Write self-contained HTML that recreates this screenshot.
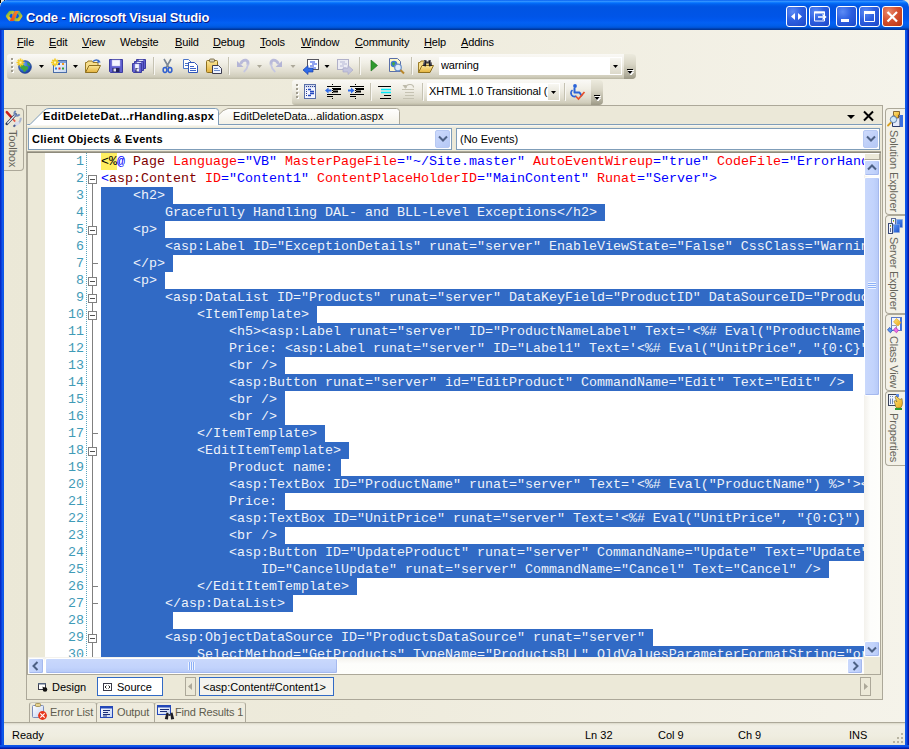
<!DOCTYPE html>
<html><head><meta charset="utf-8"><title>Code - Microsoft Visual Studio</title>
<style>
*{box-sizing:border-box;margin:0;padding:0}
html,body{width:909px;height:749px;overflow:hidden;background:linear-gradient(to right,#EBE8D7 0,#EEEBDC 40%,#F5F3EA 100%)}
body{font-family:"Liberation Sans",sans-serif;font-size:11px;color:#000;position:relative}
.a{position:absolute}
.t{position:absolute;white-space:pre;line-height:13px;height:13px}
u{text-decoration:underline;text-underline-offset:1px}
#title{left:0;top:0;width:909px;height:30px;background:linear-gradient(to bottom,#0058ee 0%,#3593ff 4%,#288eff 6%,#127dff 8%,#036ffc 10%,#0262ee 14%,#0057e5 20%,#0054e3 24%,#0055e8 56%,#0058ee 66%,#0360f4 76%,#005ee9 86%,#0052d6 92%,#0040ab 96%,#003092 100%);border-radius:7px 7px 0 0}
#bl{left:0;top:30px;width:4px;height:719px;background:linear-gradient(to right,#0422B8 0,#0838D8 30%,#0E58EA 60%,#0C55E4 100%)}
#br{left:905px;top:30px;width:4px;height:719px;background:linear-gradient(to left,#001590 0,#0426C4 30%,#0C50E4 60%,#0E5AEA 100%)}
#bb{left:0;top:745px;width:909px;height:4px;background:linear-gradient(to top,#001590 0,#0426C4 30%,#0C50E4 60%,#0E5AEA 100%)}
.code{position:absolute;left:102px;white-space:pre;font-family:"Liberation Mono",monospace;font-size:13.333px;line-height:17px;height:17px;color:#EEF2FA}
.ln{position:absolute;left:45px;width:40px;text-align:right;font-family:"Liberation Mono",monospace;font-size:13.333px;line-height:17px;height:17px;color:#3F9BB7}
.sel{position:absolute;left:101px;height:17px;background:#316AC5}
.tb{background:linear-gradient(to bottom,#FAF9F6 0%,#F1EFE6 35%,#E0DDCF 70%,#CFCCBA 92%,#B9B6A3 100%);border-radius:3px 4px 4px 3px}
.grip{width:3px;height:16px;background:linear-gradient(to right,transparent 0,transparent 1px,#fff 1px,#fff 3px) 0 1px/3px 4px repeat-y,linear-gradient(#A7A398,#A7A398) 0 0/2px 2px}
.grip i{position:absolute;left:0;width:2px;height:2px;background:#A09C8E}
.vt{writing-mode:vertical-rl;white-space:pre;font-size:11px;color:#66645A;line-height:13px;width:13px}
.sb{background:linear-gradient(to right,#C9D8FC 0,#C2D3FC 60%,#B6C9F7 100%);border:1px solid #fff;border-radius:2px;box-shadow:inset -1px -1px 0 #A5B9EE}
.m{color:#800000}.r{color:#f00}.b{color:#00f}.k{color:#000}
</style></head>
<body>
<div class="a" style="left:0;top:0;width:909px;height:10px;background:#ECE9D8"></div>
<div class="a" style="left:0;top:0;width:1px;height:3px;background:#000"></div><div class="a" style="left:4px;top:0;width:1px;height:1px;background:#000"></div>
<div class="a" id="title"></div>
<div class="a" id="bl"></div><div class="a" id="br"></div><div class="a" id="bb"></div>
<div class="t" style="left:26px;top:10px;font-size:13px;font-weight:bold;color:#fff;line-height:16px;height:16px;letter-spacing:-.17px;text-shadow:1px 1px 0 #0a1883">Code - Microsoft Visual Studio</div>
<svg class="a" style="left:5px;top:10px" width="18" height="12" viewBox="5 10 18 12"><defs><linearGradient id="gL1" x1="0" y1="0" x2="1" y2="1"><stop offset="0" stop-color="#5FB04A"/><stop offset=".5" stop-color="#F8C81C"/><stop offset="1" stop-color="#4A8FD8"/></linearGradient><linearGradient id="gL2" x1="0" y1="0" x2="1" y2="1"><stop offset="0" stop-color="#4A8FD8"/><stop offset=".5" stop-color="#6FB850"/><stop offset="1" stop-color="#F8C81C"/></linearGradient><linearGradient id="gL3" x1="0" y1="1" x2="1" y2="0"><stop offset="0" stop-color="#E8401C"/><stop offset="1" stop-color="#F89028"/></linearGradient></defs><path d="M7.300 16 L10 12.300 H13 L15 16 L13 19.700 H10 Z" fill="none" stroke="url(#gL1)" stroke-width="3" stroke-linejoin="round"/><path d="M13.500 16 L15.500 12.300 H18.500 L21 16 L18.500 19.700 H15.500 Z" fill="none" stroke="url(#gL2)" stroke-width="3" stroke-linejoin="round"/><path d="M9.800 21 L15 11 H18.800 L13.600 21 Z" fill="url(#gL3)"/></svg>
<div class="t" style="left:17px;top:36px;letter-spacing:-.15px"><u>F</u>ile</div>
<div class="t" style="left:49px;top:36px;letter-spacing:-.15px"><u>E</u>dit</div>
<div class="t" style="left:82px;top:36px;letter-spacing:-.15px"><u>V</u>iew</div>
<div class="t" style="left:120px;top:36px;letter-spacing:-.15px">Web<u>s</u>ite</div>
<div class="t" style="left:175px;top:36px;letter-spacing:-.15px"><u>B</u>uild</div>
<div class="t" style="left:213px;top:36px;letter-spacing:-.15px"><u>D</u>ebug</div>
<div class="t" style="left:260px;top:36px;letter-spacing:-.15px"><u>T</u>ools</div>
<div class="t" style="left:301px;top:36px;letter-spacing:-.15px"><u>W</u>indow</div>
<div class="t" style="left:355px;top:36px;letter-spacing:-.15px"><u>C</u>ommunity</div>
<div class="t" style="left:424px;top:36px;letter-spacing:-.15px"><u>H</u>elp</div>
<div class="t" style="left:461px;top:36px;letter-spacing:-.15px"><u>A</u>ddins</div>
<div class="a tb" style="left:7px;top:54px;width:628px;height:25px"></div>
<div class="a tb" style="left:292px;top:80px;width:309px;height:25px"></div>
<div class="a" style="left:11px;top:58px;width:3px;height:16px"><i class="a" style="left:1px;top:1px;width:2px;height:2px;background:#fff"></i><i class="a" style="left:0;top:0px;width:2px;height:2px;background:#A09C8E"></i><i class="a" style="left:1px;top:5px;width:2px;height:2px;background:#fff"></i><i class="a" style="left:0;top:4px;width:2px;height:2px;background:#A09C8E"></i><i class="a" style="left:1px;top:9px;width:2px;height:2px;background:#fff"></i><i class="a" style="left:0;top:8px;width:2px;height:2px;background:#A09C8E"></i><i class="a" style="left:1px;top:13px;width:2px;height:2px;background:#fff"></i><i class="a" style="left:0;top:12px;width:2px;height:2px;background:#A09C8E"></i></div>
<div class="a" style="left:296px;top:84px;width:3px;height:16px"><i class="a" style="left:1px;top:1px;width:2px;height:2px;background:#fff"></i><i class="a" style="left:0;top:0px;width:2px;height:2px;background:#A09C8E"></i><i class="a" style="left:1px;top:5px;width:2px;height:2px;background:#fff"></i><i class="a" style="left:0;top:4px;width:2px;height:2px;background:#A09C8E"></i><i class="a" style="left:1px;top:9px;width:2px;height:2px;background:#fff"></i><i class="a" style="left:0;top:8px;width:2px;height:2px;background:#A09C8E"></i><i class="a" style="left:1px;top:13px;width:2px;height:2px;background:#fff"></i><i class="a" style="left:0;top:12px;width:2px;height:2px;background:#A09C8E"></i></div>
<svg class="a" style="left:0;top:0" width="909" height="110" viewBox="0 0 909 110"><defs><radialGradient id="gGlobe" cx=".35" cy=".3" r=".8"><stop offset="0" stop-color="#6BA5F5"/><stop offset=".6" stop-color="#2B63D0"/><stop offset="1" stop-color="#16348A"/></radialGradient><linearGradient id="gWin" x1="0" y1="0" x2="1" y2="1"><stop offset="0" stop-color="#FFFFFF"/><stop offset="1" stop-color="#C4D4F0"/></linearGradient><linearGradient id="gFolder" x1="0" y1="0" x2="0" y2="1"><stop offset="0" stop-color="#FBE79A"/><stop offset="1" stop-color="#E4B23C"/></linearGradient></defs><circle cx="25" cy="67" r="6.300" fill="url(#gGlobe)" stroke="#1D3C8F" stroke-width=".8"/><path d="M20 65 q2 -2 4 0 q1 2 3 1 q2 1 1 3 q-2 1 -3 3 q-2 0 -2 -2 q-2 -1 -3 -3 Z" fill="#3FA53F"/><path d="M27 62 q3 1 3.500 4 q-2 0 -3 -1.500 Z" fill="#3FA53F"/>
<g stroke="#F4CC28" stroke-width="1.700" fill="none"><path d="M20.5 58.5 v8 M16.5 62.5 h8 M17.8 59.8 l5.400 5.400 M23.2 59.8 l-5.400 5.400"/></g><rect x="19.5" y="61.5" width="2" height="2" fill="#FFF6B0"/>
<path d="M39 65 h5 l-2.500 3 Z" fill="#000"/>
<rect x="53.500" y="60.500" width="13" height="12" fill="url(#gWin)" stroke="#4A6DA8"/><rect x="54" y="61" width="12" height="2" fill="#7E9FD8"/><rect x="58" y="63" width="2" height="2" fill="#2F55D0"/><rect x="62" y="63" width="2" height="2" fill="#F29A1F"/><rect x="55" y="67.500" width="2" height="2" fill="#2F7BE0"/><rect x="58.500" y="67.500" width="2" height="2" fill="#E03020"/><rect x="62" y="67.500" width="2" height="2" fill="#35A035"/>
<g stroke="#F4CC28" stroke-width="1.700" fill="none"><path d="M55.0 58.5 v8 M51.0 62.5 h8 M52.3 59.8 l5.400 5.400 M57.7 59.8 l-5.400 5.400"/></g><rect x="54.0" y="61.5" width="2" height="2" fill="#FFF6B0"/>
<path d="M73 65 h5 l-2.500 3 Z" fill="#000"/>
<path d="M85.500 72.500 V62.500 h1.500 l1 -1.500 h4 l1 1.500 h5 v2.500" fill="#F7DE8C" stroke="#9A7B28"/><path d="M85.500 72.500 L89 65.500 H100.500 L97 72.500 Z" fill="url(#gFolder)" stroke="#8E6F1E"/><path d="M93 61.500 q3.500 -3 6.500 0" fill="none" stroke="#3A6CC8" stroke-width="1.300"/><path d="M98 59.500 l2.800 2.700 l-3.600 .8 Z" fill="#3A6CC8"/>
<g transform="translate(109 59)"><path d="M0.500 0.500 H13.5 V13.5 H1.500 L0.500 12.5 Z" fill="#5F5FD0" stroke="#3C3CA0"/><rect x="3" y="1" width="8" height="6" fill="#F4F6FF" stroke="#B8B8E8" stroke-width=".5"/><rect x="3.500" y="9" width="7" height="4" fill="#23235A"/><rect x="4.500" y="9.5" width="2.500" height="3" fill="#E8E8F8"/></g>
<g transform="translate(136 59)"><path d="M0.500 0.500 H9.5 V9.5 H1.500 L0.500 8.5 Z" fill="#5F5FD0" stroke="#3C3CA0"/><rect x="3" y="1" width="4" height="6" fill="#F4F6FF" stroke="#B8B8E8" stroke-width=".5"/><rect x="3.500" y="5" width="3" height="4" fill="#23235A"/><rect x="4.500" y="5.5" width="2.500" height="3" fill="#E8E8F8"/></g>
<g transform="translate(134 61)"><path d="M0.500 0.500 H9.5 V9.5 H1.500 L0.500 8.5 Z" fill="#5F5FD0" stroke="#3C3CA0"/><rect x="3" y="1" width="4" height="6" fill="#F4F6FF" stroke="#B8B8E8" stroke-width=".5"/><rect x="3.500" y="5" width="3" height="4" fill="#23235A"/><rect x="4.500" y="5.5" width="2.500" height="3" fill="#E8E8F8"/></g>
<g transform="translate(132 63)"><path d="M0.500 0.500 H9.5 V9.5 H1.500 L0.500 8.5 Z" fill="#5F5FD0" stroke="#3C3CA0"/><rect x="3" y="1" width="4" height="6" fill="#F4F6FF" stroke="#B8B8E8" stroke-width=".5"/><rect x="3.500" y="5" width="3" height="4" fill="#23235A"/><rect x="4.500" y="5.5" width="2.500" height="3" fill="#E8E8F8"/></g>
<rect x="153" y="57" width="1" height="17" fill="#C5C2B2"/><rect x="154" y="58" width="1" height="17" fill="#F8F7F3"/>
<path d="M164 59 L168.800 67.500 M171 59 L166.200 67.500" stroke="#7B8796" stroke-width="1.600" fill="none"/><ellipse cx="165" cy="70" rx="1.900" ry="2.400" fill="none" stroke="#2F5FD0" stroke-width="1.500"/><ellipse cx="170" cy="70" rx="1.900" ry="2.400" fill="none" stroke="#2F5FD0" stroke-width="1.500"/>
<path d="M183.5 59.5 h5 l3 3 v6 h-8 Z" fill="#fff" stroke="#4A74C8"/>
<path d="M185 63.500 h4 M185 65.500 h5" stroke="#4A74C8"/>
<path d="M188.5 62.5 h6 l3 3 v7 h-9 Z" fill="#fff" stroke="#2F55B8"/>
<path d="M190 66.500 h4 M190 68.500 h6 M190 70.500 h6" stroke="#3B62C8"/>
<rect x="206.500" y="60.500" width="11" height="12" rx="1" fill="url(#gFolder)" stroke="#8E6F1E"/><rect x="209.500" y="59" width="5" height="3" rx="1" fill="#D8D0B8" stroke="#6B5A30" stroke-width=".8"/><path d="M212.500 65.500 h6 l3 3 v5 h-9 Z" fill="#EEF3FF" stroke="#3C3C50"/><path d="M214 68.500 h4 M214 70.500 h6" stroke="#6C8CCB"/>
<rect x="228" y="57" width="1" height="17" fill="#C5C2B2"/><rect x="229" y="58" width="1" height="17" fill="#F8F7F3"/>
<g><path d="M237 61 V67 H243.500 Z" fill="#B4B5D6"/><path d="M240.500 64 Q242.500 59.800 245.800 60.200 Q248.800 61.200 247.800 65" fill="none" stroke="#B9BAD9" stroke-width="2.800"/><path d="M248 64.500 Q247.300 69 244.200 71.500" fill="none" stroke="#C6C7E0" stroke-width="1.800" stroke-linecap="round"/></g>
<path d="M257 65 h5 l-2.500 3 Z" fill="#ACA899"/>
<g transform="translate(519 0) scale(-1 1)"><path d="M237 61 V67 H243.500 Z" fill="#B4B5D6"/><path d="M240.500 64 Q242.500 59.800 245.800 60.200 Q248.800 61.200 247.800 65" fill="none" stroke="#B9BAD9" stroke-width="2.800"/><path d="M248 64.500 Q247.300 69 244.200 71.500" fill="none" stroke="#C6C7E0" stroke-width="1.800" stroke-linecap="round"/></g>
<path d="M290.5 65 h5 l-2.500 3 Z" fill="#ACA899"/>
<rect x="307.500" y="59.500" width="11" height="10" fill="#fff" stroke="#55555F"/><path d="M310 62 h5 M312 64 h5 M310 66 h4 M313 68 h3" stroke="#2448E0" stroke-width="1.200"/><path d="M303 70 l5 -4.500 v2.500 h5 v4 h-5 v2.500 Z" fill="#2F6BE8" stroke="#1A3FA8" stroke-width=".7"/>
<path d="M324.5 65 h5 l-2.500 3 Z" fill="#000"/>
<rect x="337.500" y="59.500" width="11" height="10" fill="#ECECF4" stroke="#B0B0C8"/><path d="M340 62 h5 M342 64 h5 M340 66 h4 M343 68 h3" stroke="#B6B7D6" stroke-width="1.200"/><path d="M353 70 l-5 -4.500 v2.500 h-5 v4 h5 v2.500 Z" fill="#C3C4DD" stroke="#ABABC8" stroke-width=".7"/>
<rect x="359" y="57" width="1" height="17" fill="#C5C2B2"/><rect x="360" y="58" width="1" height="17" fill="#F8F7F3"/>
<path d="M371 60 L377.500 65.500 L371 71 Z" fill="#2E9A2E" stroke="#1E6E1E" stroke-width=".6"/>
<path d="M389.500 58.500 h8 l3 3 v10 h-11 Z" fill="#FFF7C8" stroke="#5A6FA8"/><circle cx="394" cy="64" r="3.300" fill="#3A78D8"/><path d="M392 63 q2 -2 3 0 q0 2 -1.500 3 q-1.500 -1 -1.500 -3 Z" fill="#45A845"/><circle cx="398" cy="67.500" r="3.300" fill="#DCEBFA" stroke="#6A8FC8" stroke-width="1.200"/><path d="M400.500 70 L404 73.500" stroke="#B8862B" stroke-width="2"/>
<rect x="411" y="57" width="1" height="17" fill="#C5C2B2"/><rect x="412" y="58" width="1" height="17" fill="#F8F7F3"/>
<path d="M418.500 72.500 V62.500 h1.500 l1 -1.500 h4 l1 1.500 h5 v2" fill="#F7DE8C" stroke="#9A7B28"/><path d="M418.500 72.500 L422 65.500 H433.500 L430 72.500 Z" fill="url(#gFolder)" stroke="#8E6F1E"/><path d="M424.500 60 l2.200 .6 l-.8 6 l-3.200 -.8 Z M430.500 60 l-2.200 .6 l.8 6 l3.200 -.8 Z" fill="#1E1E26"/><rect x="426.300" y="61.500" width="2.400" height="2" fill="#3A3A46"/><path d="M424.600 61 l-.9 4 M430.400 61 l.9 4" stroke="#8C8CA0" stroke-width=".7"/>
<rect x="304.500" y="84.500" width="11" height="14" fill="#F4F6FF" stroke="#5A6FA8"/><rect x="305" y="85" width="10" height="2.500" fill="#D0D8F0"/><path d="M306 86.500 h1 m1 0 h1 m1 0 h1 m1 0 h1 m1 0 h1" stroke="#2A3F90"/><path d="M306 89.500 h1 M306 91.500 h1 M306 93.500 h1 M306 95.500 h1" stroke="#2A3F90"/><path d="M308 89.500 h3 M310 91.500 h4 M310 93.500 h4 M308 95.500 h3" stroke="#2448C0" stroke-width="1.300"/>
<path d="M327 86.500 h14 M327 94.500 h14 M327 96.500 h6" stroke="#000"/><path d="M333 89 h8 M333 91.500 h5" stroke="#000" stroke-width="2"/><path d="M332.5 84 v1 m0 1 v1 m0 1 v1 m0 1 v1 m0 1 v1 m0 1 v1 m0 1 v1 m0 1 v1" stroke="#000"/><path d="M325 90.500 l3.500 -3 v2 h3 v2 h-3 v2 Z" fill="#2F6BE8"/>
<path d="M350 86.500 h14 M350 94.500 h14 M350 96.500 h6" stroke="#000"/><path d="M356 89 h8 M356 91.500 h5" stroke="#000" stroke-width="2"/><path d="M355.5 84 v1 m0 1 v1 m0 1 v1 m0 1 v1 m0 1 v1 m0 1 v1 m0 1 v1 m0 1 v1" stroke="#000"/><path d="M354.5 90.500 l-3.500 -3 v2 h-3 v2 h3 v2 Z" fill="#2F6BE8"/>
<rect x="370" y="83" width="1" height="17" fill="#C5C2B2"/><rect x="371" y="84" width="1" height="17" fill="#F8F7F3"/>
<path d="M378 86.500 h13 M384 95.500 h7 M380 98.500 h11" stroke="#000" stroke-width="1.200"/><path d="M381 89.500 h10 M381 92.500 h10" stroke="#00E8F8" stroke-width="1.300"/>
<path d="M402 89.500 h12 M405 92.500 h9 M405 95.500 h9 M403 98.500 h11" stroke="#C5C2B2" stroke-width="1.200"/><path d="M406 88 q0 -3.500 4 -3.500 q3.500 0 3.500 3" fill="none" stroke="#BDBAAA" stroke-width="1.200"/><path d="M402.500 85 l4 0 l-1 4 Z" fill="#BDBAAA"/>
<rect x="422" y="83" width="1" height="17" fill="#C5C2B2"/><rect x="423" y="84" width="1" height="17" fill="#F8F7F3"/>
<rect x="564" y="83" width="1" height="17" fill="#C5C2B2"/><rect x="565" y="84" width="1" height="17" fill="#F8F7F3"/>
<circle cx="575" cy="86" r="1.900" fill="#2B63D8"/><path d="M574.500 88.500 v4 h5 l2 3" fill="none" stroke="#2B63D8" stroke-width="2" stroke-linecap="round" stroke-linejoin="round"/><path d="M572.500 90 q-2.500 2 -1 5 q2 2.500 5 1" fill="none" stroke="#2B63D8" stroke-width="1.600"/><path d="M576 96.500 l2.500 2.500 l6 -7" fill="none" stroke="#E8502A" stroke-width="1.700"/></svg>
<div class="a" style="left:439px;top:57px;width:183px;height:18px;background:#fff"></div>
<div class="a" style="left:610px;top:58px;width:11px;height:16px;background:linear-gradient(to bottom,#F8F7F2,#DCD9CA)"></div>
<svg class="a" style="left:613px;top:65px" width="5" height="3" viewBox="0 0 5 3"><path d="M0 0 h5 l-2.500 3 Z" fill="#000"/></svg>
<div class="t" style="left:441px;top:59px;width:169px;overflow:hidden;letter-spacing:-.12px">warning</div>
<div class="a" style="left:427px;top:83px;width:133px;height:18px;background:#fff"></div>
<div class="a" style="left:548px;top:84px;width:11px;height:16px;background:linear-gradient(to bottom,#F8F7F2,#DCD9CA)"></div>
<svg class="a" style="left:551px;top:91px" width="5" height="3" viewBox="0 0 5 3"><path d="M0 0 h5 l-2.500 3 Z" fill="#000"/></svg>
<div class="t" style="left:429px;top:85px;width:119px;overflow:hidden;letter-spacing:-.12px">XHTML 1.0 Transitional (</div>
<div class="a" style="left:624px;top:54px;width:12px;height:25px;border-radius:0 4px 4px 0;background:linear-gradient(to bottom,#ECEADD 0,#D9D6C6 40%,#B5B2A0 80%,#9C9986 100%)"></div>
<svg class="a" style="left:626px;top:68px" width="9" height="8" viewBox="0 0 9 8"><path d="M2 2.500 h6 M2.500 4 h5 l-2.500 3 Z" fill="#fff" stroke="#fff" stroke-width="1"/><path d="M1 1.500 h6" stroke="#000"/><path d="M1.500 3 h5 l-2.500 3 Z" fill="#000"/></svg>
<div class="a" style="left:591px;top:80px;width:12px;height:25px;border-radius:0 4px 4px 0;background:linear-gradient(to bottom,#ECEADD 0,#D9D6C6 40%,#B5B2A0 80%,#9C9986 100%)"></div>
<svg class="a" style="left:593px;top:94px" width="9" height="8" viewBox="0 0 9 8"><path d="M2 2.500 h6 M2.500 4 h5 l-2.500 3 Z" fill="#fff" stroke="#fff" stroke-width="1"/><path d="M1 1.500 h6" stroke="#000"/><path d="M1.500 3 h5 l-2.500 3 Z" fill="#000"/></svg>
<div class="a" style="left:4px;top:108px;width:20px;height:63px;border:1px solid #ACA899;border-left:none;border-radius:0 4px 4px 0"></div>
<div class="a vt" id="vt0" style="left:6px;top:130px;letter-spacing:-.13px">Toolbox</div>
<svg class="a" style="left:4px;top:108px;overflow:visible" width="20" height="22" viewBox="4 108 20 22"><g transform="translate(13.5 118.5) scale(1.12) translate(-13.5 -118.2)"><path d="M7.500 112.500 L12 117.500" stroke="#C8201C" stroke-width="2.200" stroke-linecap="round"/><path d="M12 117.500 L15 121" stroke="#E85848" stroke-width="1.600"/><path d="M7.500 123 L15.500 114.500" stroke="#2A3A5A" stroke-width="2.400" stroke-linecap="round"/><path d="M8 122.500 L15.500 114.500" stroke="#fff" stroke-width="1.100"/><path d="M15.500 111.500 q-2 1.500 -.5 3.500 q2 1.500 4 -.5" fill="none" stroke="#7088B8" stroke-width="1.800"/><path d="M14 125.500 l2.500 -3 q3.500 -.5 3.500 -5" fill="none" stroke="#A8B4D0" stroke-width="1.800"/><path d="M15 121 l4 0 l-1 3 l-3 1 Z" fill="#D8DCEC"/><path d="M13.500 125.500 l1.500 -1.500" stroke="#4A5A88" stroke-width="1.500"/></g></svg>
<div class="a" style="left:885px;top:108px;width:20px;height:107px;background:#F3F1E7;border:1px solid #ACA899;border-right:none;border-radius:4px 0 0 4px"></div>
<div class="a vt" id="vt1" style="left:887px;top:130px;letter-spacing:-0.1px">Solution Explorer</div>
<div class="a" style="left:885px;top:215px;width:20px;height:99px;background:#F3F1E7;border:1px solid #ACA899;border-right:none;border-radius:4px 0 0 4px"></div>
<div class="a vt" id="vt2" style="left:887px;top:237px;letter-spacing:-0.22px">Server Explorer</div>
<div class="a" style="left:885px;top:314px;width:20px;height:77px;background:#F3F1E7;border:1px solid #ACA899;border-right:none;border-radius:4px 0 0 4px"></div>
<div class="a vt" id="vt3" style="left:887px;top:336px;letter-spacing:-0.22px">Class View</div>
<div class="a" style="left:885px;top:391px;width:20px;height:75px;background:#F3F1E7;border:1px solid #ACA899;border-right:none;border-radius:4px 0 0 4px"></div>
<div class="a vt" id="vt4" style="left:887px;top:413px;letter-spacing:-0.1px">Properties</div>
<svg class="a" style="left:885px;top:105px" width="20" height="310" viewBox="885 105 20 310"><defs><linearGradient id="gScr" x1="0" y1="0" x2="1" y2="1"><stop offset="0" stop-color="#5A9AF8"/><stop offset="1" stop-color="#1C4FC8"/></linearGradient><linearGradient id="gGold" x1="0" y1="0" x2="1" y2="1"><stop offset="0" stop-color="#FFE27A"/><stop offset="1" stop-color="#E8A818"/></linearGradient></defs><path d="M892.500 126.500 V116 H900 V126.500 Z" fill="#E4EAFA" stroke="#2A3A6A"/><rect x="900" y="115" width="3" height="12" fill="#3A6FE0"/><path d="M893.500 111.500 h6 v3.500 h-1 v3 h-2 l-3 -3 Z" fill="url(#gGold)" stroke="#6A4A18" stroke-width=".8"/><path d="M891.500 122 L888 125.500" stroke="#D8A020" stroke-width="1.800" stroke-linecap="round"/><circle cx="893.500" cy="119.500" r="3.200" fill="#CFE8F8" stroke="#5A7AA8" stroke-width=".9"/><rect x="896.500" y="219.500" width="6" height="8" fill="url(#gScr)" stroke="#8AA8E0" stroke-width=".6"/><rect x="891.500" y="218.500" width="4" height="7" fill="#F0F4FF" stroke="#5A6A98"/><rect x="893" y="220" width="1" height="1" fill="#40B040"/><rect x="893" y="221" width="1" height="1" fill="#F0A020"/><rect x="893.500" y="224.500" width="6" height="8" fill="url(#gScr)" stroke="#8AA8E0" stroke-width=".6"/><rect x="888.500" y="223.500" width="4" height="10" fill="#F0F4FF" stroke="#3A4A78"/><rect x="890" y="225" width="1" height="1" fill="#40B040"/><rect x="890" y="226" width="1" height="1" fill="#F0A020"/><rect x="890" y="228" width="1" height="4" fill="#5A6A98"/><rect x="891.500" y="317.500" width="10" height="13" fill="#F2F6FF" stroke="#5A7AC8"/><rect x="900" y="318" width="1.500" height="12" fill="#3A6FE0"/><path d="M891.500 325.500 h5 v5" fill="none" stroke="#9AA0A8"/><path d="M896.500 318.500 L901 322.500 L898 326 L893.500 322 Z" fill="url(#gGold)" stroke="#E0A010" stroke-width=".6"/><path d="M889.500 327.500 L892.500 330 L890.500 332.800 L887.500 330 Z" fill="#5A9AE8" stroke="#1C3FB0" stroke-width=".7"/><path d="M895.500 327.500 L898.500 330 L896.500 332.800 L893.500 330 Z" fill="#F070E8" stroke="#B030B0" stroke-width=".7"/><rect x="888.500" y="394.500" width="9" height="11" fill="#EEF4FF" stroke="#3A4258"/><rect x="896" y="394" width="3" height="3" fill="#5A8AE8"/><path d="M890.500 396 v1 m0 1.500 v5.500 M892.500 396 v1 m0 1.500 v5.500" stroke="#7088B8"/><path d="M895 397 l1 -1 l4 3.500 l2 -1 l.5 4.500 q0 3 -2 5 h-3.500 q-2 -1 -2 -4 l-1 -3 l1.500 -.5 l1.500 1.500 Z" fill="url(#gGold)" stroke="#5A4A18" stroke-width=".5"/><rect x="895" y="408" width="7" height="2" fill="#2F9A2F"/></svg>
<div class="a" style="left:26px;top:105px;width:857px;height:595px;border:1px solid #ACA899;background:#ECE9D8"></div>
<div class="a" style="left:27px;top:106px;width:855px;height:19px;background:#EBE8D8"></div>
<div class="a" style="left:27px;top:124px;width:855px;height:1px;background:#7F9DB9"></div>
<svg class="a" style="left:27px;top:106px" width="380" height="20" viewBox="0 0 380 20"><defs><linearGradient id="gTab" x1="0" y1="0" x2="0" y2="1"><stop offset="0" stop-color="#FFFFFF"/><stop offset="1" stop-color="#F3F1E6"/></linearGradient></defs><path d="M191.500 9 Q196 3.500 201 2.500 H369.500 Q372.500 2.500 372.500 5.500 V18 H191.500 Z" fill="url(#gTab)" stroke="none"/><path d="M191.500 9 Q196 3.500 201 2.500 H369.500 Q372.500 2.500 372.500 5.500 V18" fill="none" stroke="#ACA899"/><path d="M0.500 18.500 H3 L17 4.500 Q19 2.500 22 2.500 H188.500 Q191.500 2.500 191.500 5.500 V19 H0 Z" fill="#fff" stroke="none"/><path d="M0.500 18.500 H3 L17 4.500 Q19 2.500 22 2.500 H188.500 Q191.500 2.500 191.500 5.500 V19" fill="none" stroke="#7F9DB9"/></svg>
<div class="t" style="left:43px;top:110px;font-weight:bold;letter-spacing:.37px">EditDeleteDat...rHandling.aspx</div>
<div class="t" style="left:233px;top:110px">EditDeleteData...alidation.aspx</div>
<div class="a" style="left:27px;top:125px;width:855px;height:3px;background:linear-gradient(to bottom,#FBFAF6,#F1EFE3 50%,#EAE7D7)"></div>
<svg class="a" style="left:845px;top:109.500px" width="32" height="12" viewBox="0 0 32 12"><path d="M2 5 H10 L6 9 Z" fill="#000"/><path d="M19 1.500 L28 10.500 M28 1.500 L19 10.500" stroke="#000" stroke-width="2" fill="none"/></svg>
<div class="a" style="left:28px;top:128px;width:424px;height:22px;background:#fff;border:1px solid #7F9DB9"></div>
<div class="t" style="left:32px;top:133px;font-weight:bold;letter-spacing:.3px">Client Objects &amp; Events</div>
<div class="a" style="left:435px;top:130px;width:15px;height:18px;border-radius:2px;background:linear-gradient(135deg,#CDDAFC,#B4C8F6);border:1px solid #B7C9F3"></div>
<svg class="a" style="left:438px;top:135px" width="10" height="8" viewBox="0 0 10 8"><path d="M1 1.500 L5 5.500 L9 1.500" fill="none" stroke="#4D6185" stroke-width="2"/></svg>
<div class="a" style="left:456px;top:128px;width:424px;height:22px;background:#fff;border:1px solid #7F9DB9"></div>
<div class="t" style="left:460px;top:133px;">(No Events)</div>
<div class="a" style="left:863px;top:130px;width:15px;height:18px;border-radius:2px;background:linear-gradient(135deg,#CDDAFC,#B4C8F6);border:1px solid #B7C9F3"></div>
<svg class="a" style="left:866px;top:135px" width="10" height="8" viewBox="0 0 10 8"><path d="M1 1.500 L5 5.500 L9 1.500" fill="none" stroke="#4D6185" stroke-width="2"/></svg>
<div class="a" style="left:27px;top:151px;width:854px;height:1px;background:#ACA899"></div>
<div class="a" style="left:27px;top:152px;width:854px;height:1px;background:#8E8B7C"></div>
<div class="a" id="ed" style="left:28px;top:153px;width:836px;height:504px;background:#fff;overflow:hidden">
<div class="a" style="left:0;top:0;width:17px;height:504px;background:#ECE9D8"></div>
<div class="ln" style="left:16px;top:0px">1</div>
<div class="a" style="left:73px;top:0;width:16px;height:17px;background:#FFEE62"></div>
<div class="code" style="left:73px;top:0px"><span class="k">&lt;%</span><span class="b">@</span><span class="m"> Page</span> <span class="r">Language</span><span class="b">="VB"</span> <span class="r">MasterPageFile</span><span class="b">="~/Site.master"</span> <span class="r">AutoEventWireup</span><span class="b">="true"</span> <span class="r">CodeFile</span><span class="b">="ErrorHandling.aspx.vb"</span> <span class="r">Inherits</span><span class="b">="EditDeleteDataList_ErrorHandling"</span> </div>
<div class="ln" style="left:16px;top:17px">2</div>
<div class="code" style="left:73px;top:17px"><span class="b">&lt;</span><span class="m">asp:Content</span> <span class="r">ID</span><span class="b">="Content1"</span> <span class="r">ContentPlaceHolderID</span><span class="b">="MainContent"</span> <span class="r">Runat</span><span class="b">="Server"&gt;</span></div>
<div class="ln" style="left:16px;top:34px">3</div>
<div class="sel" style="left:73px;top:34px;width:72px"></div>
<div class="code" style="left:73px;top:34px">    &lt;h2&gt;</div>
<div class="ln" style="left:16px;top:51px">4</div>
<div class="sel" style="left:73px;top:51px;width:504px"></div>
<div class="code" style="left:73px;top:51px">        Gracefully Handling DAL- and BLL-Level Exceptions&lt;/h2&gt;</div>
<div class="ln" style="left:16px;top:68px">5</div>
<div class="sel" style="left:73px;top:68px;width:64px"></div>
<div class="code" style="left:73px;top:68px">    &lt;p&gt;</div>
<div class="ln" style="left:16px;top:85px">6</div>
<div class="sel" style="left:73px;top:85px;width:763px"></div>
<div class="code" style="left:73px;top:85px">        &lt;asp:Label ID="ExceptionDetails" runat="server" EnableViewState="False" CssClass="Warning"</div>
<div class="ln" style="left:16px;top:102px">7</div>
<div class="sel" style="left:73px;top:102px;width:72px"></div>
<div class="code" style="left:73px;top:102px">    &lt;/p&gt;</div>
<div class="ln" style="left:16px;top:119px">8</div>
<div class="sel" style="left:73px;top:119px;width:64px"></div>
<div class="code" style="left:73px;top:119px">    &lt;p&gt;</div>
<div class="ln" style="left:16px;top:136px">9</div>
<div class="sel" style="left:73px;top:136px;width:763px"></div>
<div class="code" style="left:73px;top:136px">        &lt;asp:DataList ID="Products" runat="server" DataKeyField="ProductID" DataSourceID="ProductsDataSource" RepeatColumns="2"&gt;</div>
<div class="ln" style="left:16px;top:153px">10</div>
<div class="sel" style="left:73px;top:153px;width:216px"></div>
<div class="code" style="left:73px;top:153px">            &lt;ItemTemplate&gt;</div>
<div class="ln" style="left:16px;top:170px">11</div>
<div class="sel" style="left:73px;top:170px;width:763px"></div>
<div class="code" style="left:73px;top:170px">                &lt;h5&gt;&lt;asp:Label runat="server" ID="ProductNameLabel" Text='&lt;%# Eval("ProductName") %&gt;'&gt;&lt;/asp:Label&gt;&lt;/h5&gt;</div>
<div class="ln" style="left:16px;top:187px">12</div>
<div class="sel" style="left:73px;top:187px;width:763px"></div>
<div class="code" style="left:73px;top:187px">                Price: &lt;asp:Label runat="server" ID="Label1" Text='&lt;%# Eval("UnitPrice", "{0:C}") %&gt;' /&gt;</div>
<div class="ln" style="left:16px;top:204px">13</div>
<div class="sel" style="left:73px;top:204px;width:184px"></div>
<div class="code" style="left:73px;top:204px">                &lt;br /&gt;</div>
<div class="ln" style="left:16px;top:221px">14</div>
<div class="sel" style="left:73px;top:221px;width:752px"></div>
<div class="code" style="left:73px;top:221px">                &lt;asp:Button runat="server" id="EditProduct" CommandName="Edit" Text="Edit" /&gt;</div>
<div class="ln" style="left:16px;top:238px">15</div>
<div class="sel" style="left:73px;top:238px;width:184px"></div>
<div class="code" style="left:73px;top:238px">                &lt;br /&gt;</div>
<div class="ln" style="left:16px;top:255px">16</div>
<div class="sel" style="left:73px;top:255px;width:184px"></div>
<div class="code" style="left:73px;top:255px">                &lt;br /&gt;</div>
<div class="ln" style="left:16px;top:272px">17</div>
<div class="sel" style="left:73px;top:272px;width:224px"></div>
<div class="code" style="left:73px;top:272px">            &lt;/ItemTemplate&gt;</div>
<div class="ln" style="left:16px;top:289px">18</div>
<div class="sel" style="left:73px;top:289px;width:248px"></div>
<div class="code" style="left:73px;top:289px">            &lt;EditItemTemplate&gt;</div>
<div class="ln" style="left:16px;top:306px">19</div>
<div class="sel" style="left:73px;top:306px;width:240px"></div>
<div class="code" style="left:73px;top:306px">                Product name:</div>
<div class="ln" style="left:16px;top:323px">20</div>
<div class="sel" style="left:73px;top:323px;width:763px"></div>
<div class="code" style="left:73px;top:323px">                &lt;asp:TextBox ID="ProductName" runat="server" Text='&lt;%# Eval("ProductName") %&gt;'&gt;&lt;/asp:TextBox&gt;&lt;br /&gt;</div>
<div class="ln" style="left:16px;top:340px">21</div>
<div class="sel" style="left:73px;top:340px;width:184px"></div>
<div class="code" style="left:73px;top:340px">                Price:</div>
<div class="ln" style="left:16px;top:357px">22</div>
<div class="sel" style="left:73px;top:357px;width:763px"></div>
<div class="code" style="left:73px;top:357px">                &lt;asp:TextBox ID="UnitPrice" runat="server" Text='&lt;%# Eval("UnitPrice", "{0:C}") %&gt;' /&gt;&lt;br /&gt;</div>
<div class="ln" style="left:16px;top:374px">23</div>
<div class="sel" style="left:73px;top:374px;width:184px"></div>
<div class="code" style="left:73px;top:374px">                &lt;br /&gt;</div>
<div class="ln" style="left:16px;top:391px">24</div>
<div class="sel" style="left:73px;top:391px;width:763px"></div>
<div class="code" style="left:73px;top:391px">                &lt;asp:Button ID="UpdateProduct" runat="server" CommandName="Update" Text="Update" /&gt;&amp;nbsp;&amp;nbsp;&amp;nbsp;&lt;asp:Button</div>
<div class="ln" style="left:16px;top:408px">25</div>
<div class="sel" style="left:73px;top:408px;width:728px"></div>
<div class="code" style="left:73px;top:408px">                    ID="CancelUpdate" runat="server" CommandName="Cancel" Text="Cancel" /&gt;</div>
<div class="ln" style="left:16px;top:425px">26</div>
<div class="sel" style="left:73px;top:425px;width:256px"></div>
<div class="code" style="left:73px;top:425px">            &lt;/EditItemTemplate&gt;</div>
<div class="ln" style="left:16px;top:442px">27</div>
<div class="sel" style="left:73px;top:442px;width:192px"></div>
<div class="code" style="left:73px;top:442px">        &lt;/asp:DataList&gt;</div>
<div class="ln" style="left:16px;top:459px">28</div>
<div class="sel" style="left:73px;top:459px;width:72px"></div>
<div class="code" style="left:73px;top:459px">        </div>
<div class="ln" style="left:16px;top:476px">29</div>
<div class="sel" style="left:73px;top:476px;width:552px"></div>
<div class="code" style="left:73px;top:476px">        &lt;asp:ObjectDataSource ID="ProductsDataSource" runat="server"</div>
<div class="ln" style="left:16px;top:493px">30</div>
<div class="sel" style="left:73px;top:493px;width:763px"></div>
<div class="code" style="left:73px;top:493px">            SelectMethod="GetProducts" TypeName="ProductsBLL" OldValuesParameterFormatString="original_{0}"&gt;</div>
<svg class="a" style="left:56px;top:0" width="16" height="504" viewBox="84 153 16 504"><path d="M86.500 153 V657" stroke="#5BA5BD" stroke-dasharray="1 1"/><path d="M92.500 184 V657" stroke="#808080"/><path d="M92 263.5 H98" stroke="#808080"/><path d="M92 433.5 H98" stroke="#808080"/><path d="M92 586.5 H98" stroke="#808080"/><path d="M92 603.5 H98" stroke="#808080"/><rect x="88.500" y="175.5" width="8" height="8" fill="#fff" stroke="#808080"/><path d="M90 179.5 H95" stroke="#505050"/><rect x="88.500" y="226.5" width="8" height="8" fill="#fff" stroke="#808080"/><path d="M90 230.5 H95" stroke="#505050"/><rect x="88.500" y="277.5" width="8" height="8" fill="#fff" stroke="#808080"/><path d="M90 281.5 H95" stroke="#505050"/><rect x="88.500" y="294.5" width="8" height="8" fill="#fff" stroke="#808080"/><path d="M90 298.5 H95" stroke="#505050"/><rect x="88.500" y="311.5" width="8" height="8" fill="#fff" stroke="#808080"/><path d="M90 315.5 H95" stroke="#505050"/><rect x="88.500" y="447.5" width="8" height="8" fill="#fff" stroke="#808080"/><path d="M90 451.5 H95" stroke="#505050"/><rect x="88.500" y="634.5" width="8" height="8" fill="#fff" stroke="#808080"/><path d="M90 638.5 H95" stroke="#505050"/></svg>
</div>
<div class="a" style="left:864px;top:153px;width:16px;height:504px;background:linear-gradient(to right,#F3F1EC 0,#FDFDFB 40%,#FEFEFB 100%)"></div>
<div class="a" style="left:864px;top:153px;width:16px;height:7px;background:#ECE9D8;border:1px solid;border-color:#fff #ACA899 #ACA899 #fff"></div>
<div class="a sb" style="left:864px;top:160px;width:16px;height:16px"></div>
<svg class="a" style="left:864px;top:160px" width="16" height="16" viewBox="0 0 16 16"><path d="M4 9.500 L8 5.500 L12 9.500" fill="none" stroke="#4D6185" stroke-width="2"/></svg>
<div class="a sb" style="left:864px;top:641px;width:16px;height:16px"></div>
<svg class="a" style="left:864px;top:641px" width="16" height="16" viewBox="0 0 16 16"><path d="M4 6.500 L8 10.500 L12 6.500" fill="none" stroke="#4D6185" stroke-width="2"/></svg>
<div class="a sb" style="left:864px;top:177px;width:16px;height:219px"></div>
<div class="a" style="left:868px;top:282px;width:8px;height:7px;background:repeating-linear-gradient(to bottom,#EEF4FE 0,#EEF4FE 1px,#8CB0F8 1px,#8CB0F8 2px)"></div>
<div class="a" style="left:28px;top:657px;width:836px;height:17px;background:linear-gradient(to bottom,#F3F1EC 0,#FDFDFB 40%,#FEFEFB 100%)"></div>
<div class="a" style="left:864px;top:657px;width:16px;height:17px;background:#ECE9D8"></div>
<div class="a sb" style="left:28px;top:658px;width:16px;height:16px"></div>
<svg class="a" style="left:28px;top:658px" width="16" height="16" viewBox="0 0 16 16"><path d="M9.500 4 L5.500 8 L9.500 12" fill="none" stroke="#4D6185" stroke-width="2"/></svg>
<div class="a sb" style="left:847px;top:658px;width:16px;height:16px"></div>
<svg class="a" style="left:847px;top:658px" width="16" height="16" viewBox="0 0 16 16"><path d="M6.500 4 L10.500 8 L6.500 12" fill="none" stroke="#4D6185" stroke-width="2"/></svg>
<div class="a sb" style="left:45px;top:658px;width:293px;height:16px;background:linear-gradient(to bottom,#C9D8FC 0,#C2D3FC 60%,#B6C9F7 100%)"></div>
<div class="a" style="left:188px;top:662px;width:7px;height:8px;background:repeating-linear-gradient(to right,#EEF4FE 0,#EEF4FE 1px,#8CB0F8 1px,#8CB0F8 2px)"></div>
<div class="a" style="left:880px;top:153px;width:1px;height:521px;background:#ACA899"></div>
<div class="a" style="left:27px;top:153px;width:1px;height:521px;background:#ACA899"></div>
<div class="a" style="left:27px;top:674px;width:854px;height:1px;background:#ACA899"></div>
<div class="t" style="left:52px;top:681px">Design</div>
<div class="a" style="left:97px;top:677px;width:66px;height:19px;background:#fff;border:1px solid #316AC5"></div>
<div class="t" style="left:117px;top:681px">Source</div>
<div class="a" style="left:185px;top:677px;width:11px;height:19px;border:1px solid #ACA899;background:#ECE9D8"></div>
<svg class="a" style="left:185px;top:677px" width="11" height="19" viewBox="0 0 11 19"><path d="M7 6 L3 9.500 L7 13 Z" fill="#ACA899"/></svg>
<div class="a" style="left:860px;top:677px;width:11px;height:19px;border:1px solid #ACA899;background:#ECE9D8"></div>
<svg class="a" style="left:860px;top:677px" width="11" height="19" viewBox="0 0 11 19"><path d="M4 6 L8 9.500 L4 13 Z" fill="#ACA899"/></svg>
<div class="a" style="left:199px;top:677px;width:135px;height:19px;border:1px solid #316AC5;background:#F4F3EE"></div>
<div class="t" style="left:203px;top:681px">&lt;asp:Content#Content1&gt;</div>
<svg class="a" style="left:36px;top:680px" width="80" height="14" viewBox="36 680 80 14"><rect x="38.500" y="683.500" width="7" height="6" fill="#fff" stroke="#3A3A48"/><rect x="38" y="683" width="8" height="1.500" fill="#55657F"/><circle cx="45" cy="689.500" r="2.300" fill="#111"/><path d="M42.500 686.500 l3 2 l-2.500 1 Z" fill="#111"/><rect x="103.500" y="683.500" width="8" height="7" fill="#fff" stroke="#3A3A48"/><path d="M106.500 685.500 l-1.500 1.500 l1.500 1.500 M108.500 685.500 l1.500 1.500 l-1.500 1.500" fill="none" stroke="#111" stroke-width=".9"/></svg>
<div class="a" style="left:29px;top:702px;width:68px;height:20px;border:1px solid #ACA899;border-top-color:#CDCABB;border-bottom:none;border-radius:3px 3px 0 0;background:rgba(255,255,255,.12)"></div>
<div class="t" style="left:50px;top:706px;color:#5E5C4E;letter-spacing:-.15px">Error List</div>
<div class="a" style="left:96px;top:702px;width:59px;height:20px;border:1px solid #ACA899;border-top-color:#CDCABB;border-bottom:none;border-radius:3px 3px 0 0;background:rgba(255,255,255,.12)"></div>
<div class="t" style="left:117px;top:706px;color:#5E5C4E;letter-spacing:-.15px">Output</div>
<div class="a" style="left:154px;top:702px;width:92px;height:20px;border:1px solid #ACA899;border-top-color:#CDCABB;border-bottom:none;border-radius:3px 3px 0 0;background:rgba(255,255,255,.12)"></div>
<div class="t" style="left:175px;top:706px;color:#5E5C4E;letter-spacing:-.15px">Find Results 1</div>
<svg class="a" style="left:30px;top:700px" width="150" height="24" viewBox="30 700 150 24"><defs><linearGradient id="gPg" x1="0" y1="0" x2="1" y2="1"><stop offset="0" stop-color="#FFFFFF"/><stop offset="1" stop-color="#C2D2F2"/></linearGradient></defs><rect x="32.500" y="705.500" width="11" height="12" rx="1" fill="url(#gPg)" stroke="#7C8CB8"/><rect x="35.500" y="703.500" width="5" height="3" rx=".8" fill="#E8D490" stroke="#9A8848" stroke-width=".8"/><circle cx="42.500" cy="715.500" r="4.400" fill="#E8381C"/><path d="M40.300 713.300 l4.400 4.400 m0 -4.400 l-4.400 4.400" stroke="#fff" stroke-width="1.200"/><rect x="100.500" y="706.500" width="12" height="11" fill="url(#gPg)" stroke="#2448B8"/><rect x="100" y="706" width="13" height="2.500" fill="#2448B8"/><path d="M103 710.500 h7 M103 712.500 h5 M103 714.500 h7 M103 716 h4" stroke="#1C2F78"/><rect x="157.500" y="705.500" width="13" height="9" fill="url(#gPg)" stroke="#2448B8"/><rect x="157" y="705" width="14" height="2.500" fill="#2448B8"/><path d="M160 709.500 h9 M160 711.500 h7" stroke="#1C2F78"/><path d="M166.500 712.500 l2 .4 l-.5 6.600 l-3.200 -.5 Z M172.500 712.500 l-2 .4 l.5 6.600 l3.200 -.5 Z" fill="#1E1E26"/><rect x="168.300" y="714" width="2.400" height="2" fill="#3A3A46"/></svg>
<div class="a" style="left:4px;top:722px;width:901px;height:23px;background:linear-gradient(to bottom,#ACA899 0,#ACA899 1px,#D6D3C3 1px,#E9E7DA 2px,#F1EFE5 4px,#EFEDE0 60%,#E9E6D6 100%)"></div>
<div class="t" style="left:12px;top:729px">Ready</div>
<div class="t" style="left:585px;top:729px">Ln 32</div>
<div class="t" style="left:658px;top:729px">Col 9</div>
<div class="t" style="left:738px;top:729px">Ch 9</div>
<div class="t" style="left:849px;top:729px">INS</div>
<svg class="a" style="left:892px;top:732px" width="13" height="13" viewBox="0 0 13 13"><g fill="#B8B4A2"><rect x="9" y="1" width="2" height="2"/><rect x="5" y="5" width="2" height="2"/><rect x="9" y="5" width="2" height="2"/><rect x="1" y="9" width="2" height="2"/><rect x="5" y="9" width="2" height="2"/><rect x="9" y="9" width="2" height="2"/></g></svg>
<div class="a" style="left:786px;top:6px;width:21px;height:21px;border:1px solid #fff;border-radius:3px;background:radial-gradient(circle at 30% 25%,#5C8BF5 0,#2D5FE0 45%,#1C47C8 100%)"></div>
<div class="a" style="left:809px;top:6px;width:21px;height:21px;border:1px solid #fff;border-radius:3px;background:radial-gradient(circle at 30% 25%,#5C8BF5 0,#2D5FE0 45%,#1C47C8 100%)"></div>
<div class="a" style="left:836px;top:6px;width:21px;height:21px;border:1px solid #fff;border-radius:3px;background:radial-gradient(circle at 30% 25%,#5C8BF5 0,#2D5FE0 45%,#1C47C8 100%)"></div>
<div class="a" style="left:859px;top:6px;width:21px;height:21px;border:1px solid #fff;border-radius:3px;background:radial-gradient(circle at 30% 25%,#5C8BF5 0,#2D5FE0 45%,#1C47C8 100%)"></div>
<div class="a" style="left:882px;top:6px;width:21px;height:21px;border:1px solid #fff;border-radius:3px;background:radial-gradient(circle at 30% 25%,#E9896C 0,#D5502F 45%,#B93310 100%)"></div>
<svg class="a" style="left:786px;top:6px" width="117" height="21" viewBox="0 0 117 21"><path d="M5 10.500 L9 7 V14 Z M16 10.500 L12 7 V14 Z" fill="#fff"/><path d="M28.500 6 H38.500 V15 H28.500 Z" fill="none" stroke="#fff" stroke-width="1"/><path d="M28 6.500 H39" stroke="#fff" stroke-width="2"/><path d="M32 11 H38 M36.500 8.500 L39.500 11 L36.500 13.500" stroke="#fff" stroke-width="1.500" fill="none"/><rect x="55" y="13" width="8" height="3" fill="#fff"/><path d="M78.500 6.500 H88.500 V15.500 H78.500 Z" fill="none" stroke="#fff" stroke-width="1"/><path d="M78 6.500 H89" stroke="#fff" stroke-width="3"/><path d="M101.500 6 L111 15.500 M111 6 L101.500 15.500" stroke="#fff" stroke-width="2.200" fill="none"/></svg>
</body></html>
